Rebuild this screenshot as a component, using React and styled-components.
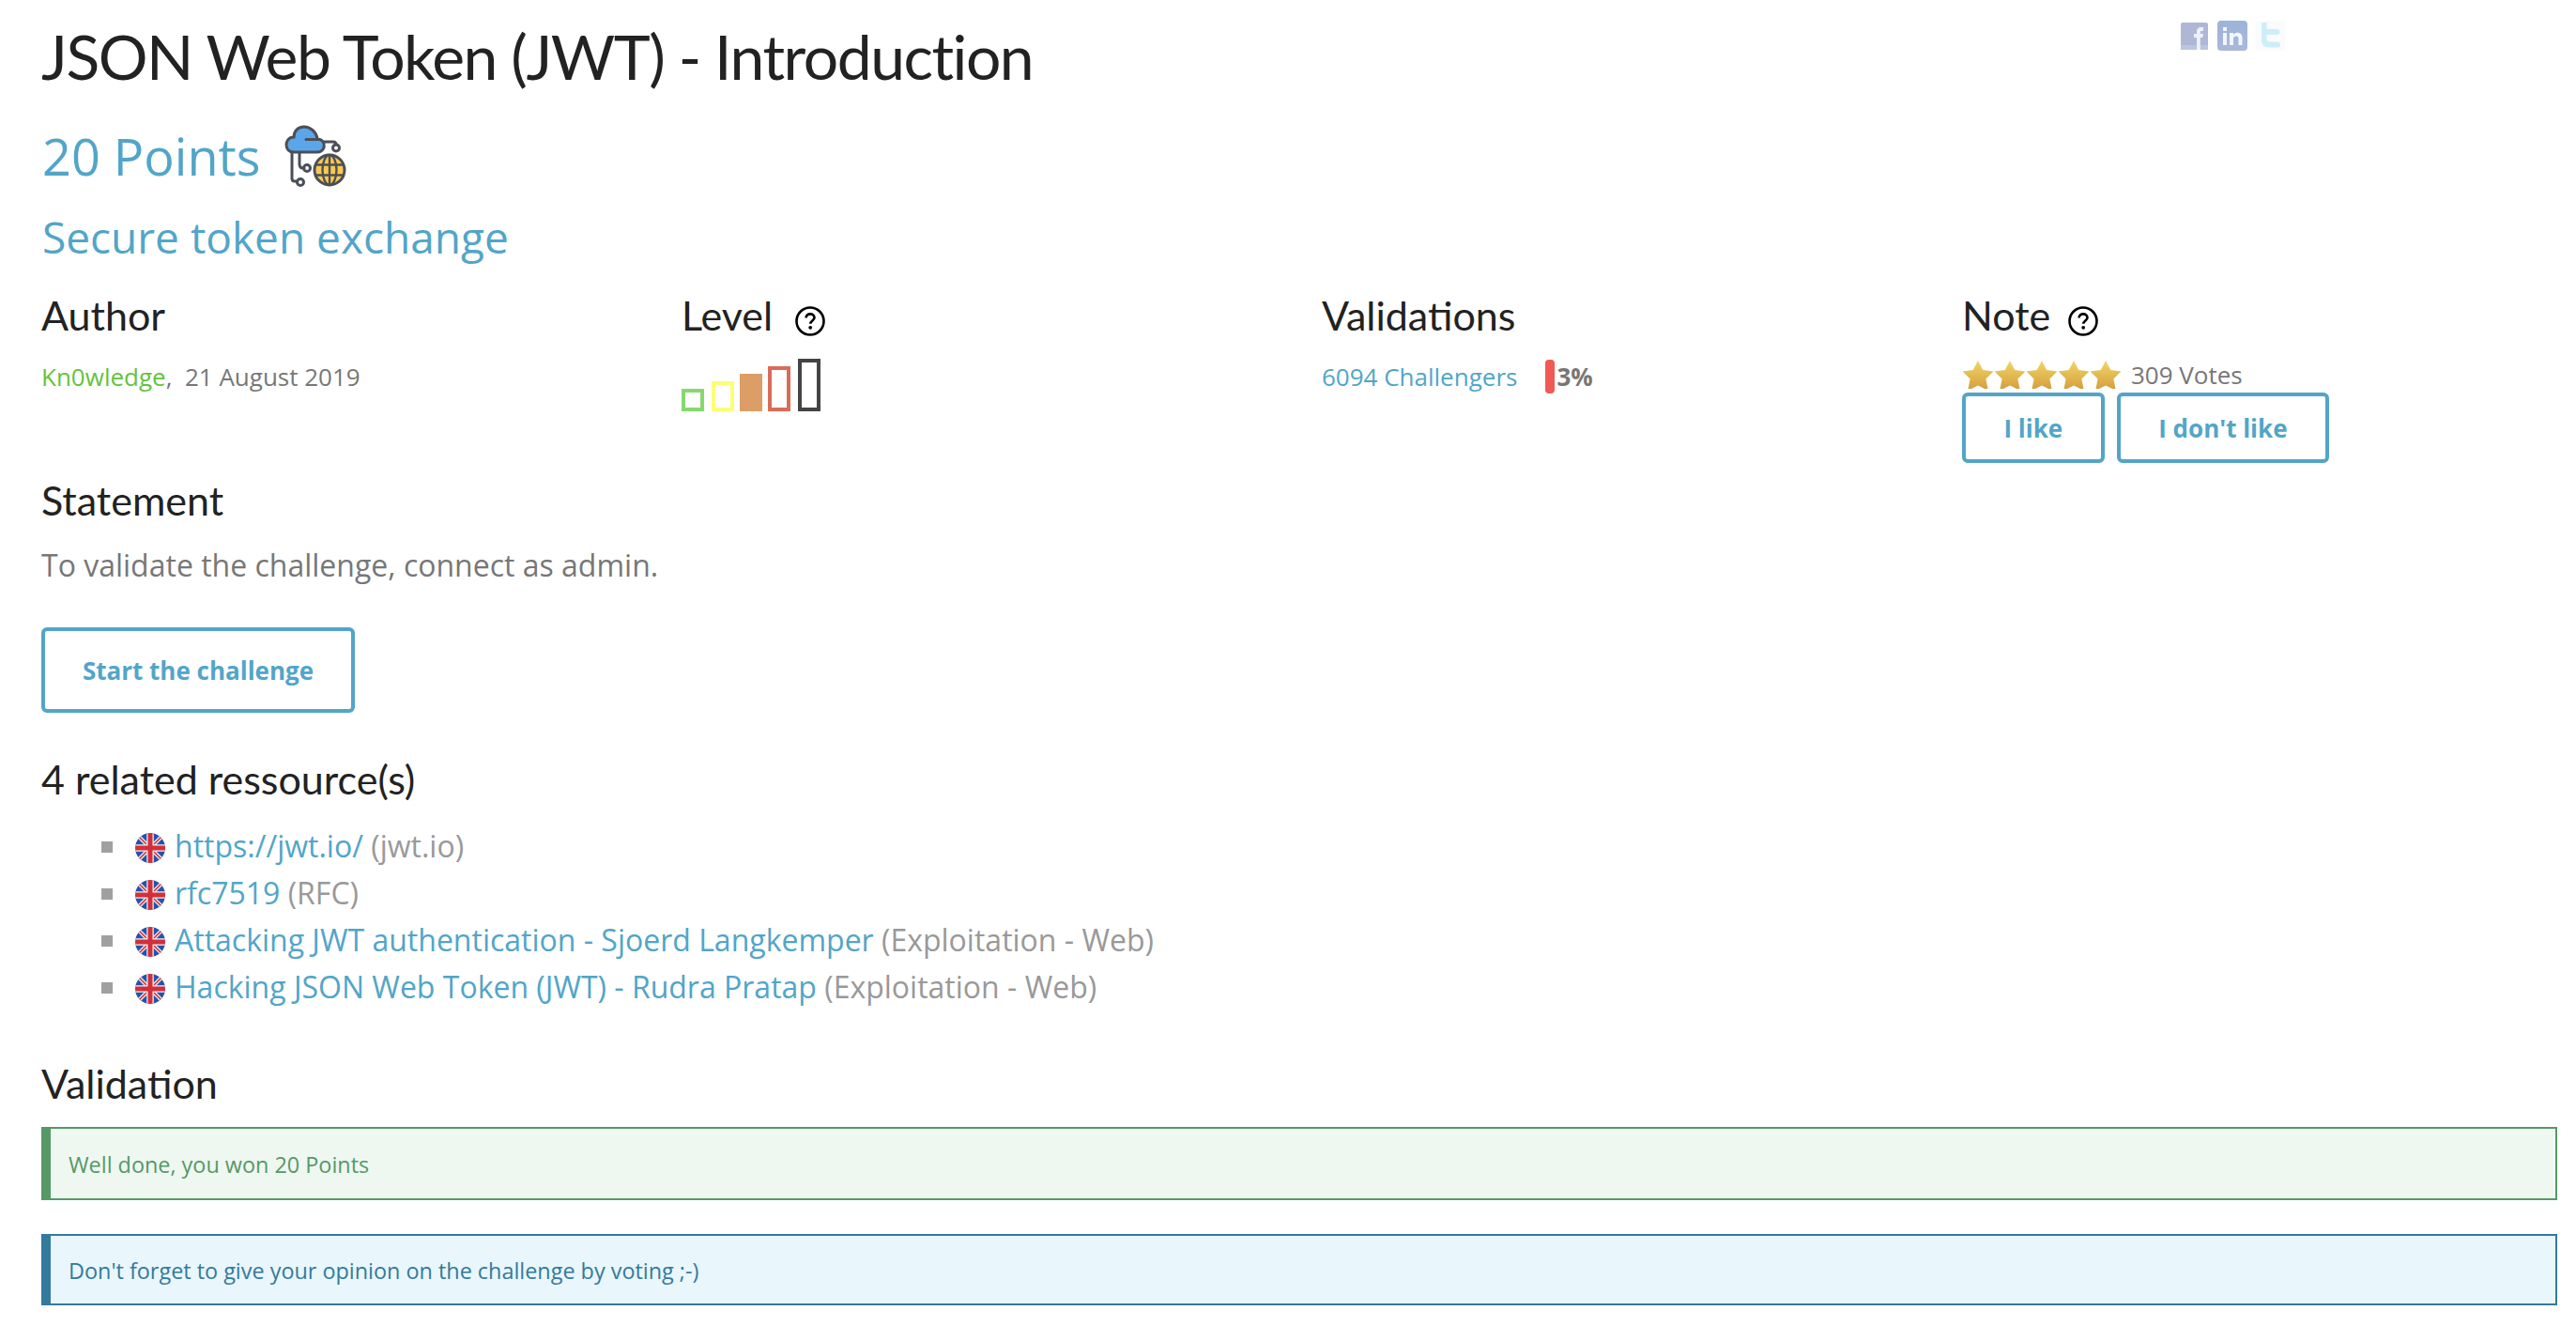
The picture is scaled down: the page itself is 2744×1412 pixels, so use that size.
import React from 'react'
import styled, { createGlobalStyle } from 'styled-components'

const BLUE = '#52a5c8'

const Global = createGlobalStyle`
  html, body {
    margin: 0;
    padding: 0;
    background: #fff;
  }
  body {
    font-family: "Open Sans", "Liberation Sans", sans-serif;
    color: #777;
  }
`

const HelpIcon = () => (
  <HelpSvg viewBox="0 0 32 32" width="32" height="32">
    <circle cx="16" cy="16" r="14.5" fill="none" stroke="#000" strokeWidth="2.6" />
    <path d="M11.6 12.6c0-2.6 2-4.2 4.5-4.2s4.4 1.5 4.4 3.8c0 3.3-4.2 3.4-4.2 6.6" fill="none" stroke="#000" strokeWidth="2.6" />
    <circle cx="16.2" cy="22.8" r="1.9" fill="#000" />
  </HelpSvg>
)

const CloudIcon = () => (
  <CloudSvg viewBox="22 8 68 68" width="68" height="68">
    <g fill="none" stroke="#4b4f58" strokeWidth="3" strokeLinecap="round">
      <path d="M31 38V66q0 3 3 3H36" />
      <path d="M39 38V51q0 4 4 4H44" />
      <path d="M65 27H75q3 0 3 3" />
      <circle cx="78" cy="33.5" r="3.5" />
      <circle cx="40" cy="70" r="3.5" />
      <circle cx="47" cy="55" r="3.5" />
    </g>
    <path
      d="M33 38H58C64 38 66 33 65 29C64 26 61 24 58 24C57 16 50 11 44 11C37 11 33 16 33 22C27 22 25 27 25 30C25 35 28 38 33 38Z"
      fill="#5aa6e9"
      stroke="#4b4f58"
      strokeWidth="3"
    />
    <path d="M46 24.500H60" stroke="#4b4f58" strokeWidth="3" strokeLinecap="round" />
    <circle cx="71" cy="57" r="16" fill="#fbc94f" stroke="#4b4f58" strokeWidth="3" />
    <g fill="none" stroke="#4b4f58" strokeWidth="2.4">
      <ellipse cx="71" cy="57" rx="7.500" ry="16" />
      <path d="M71 41V73M56 51.500H86M56 62.500H86" />
    </g>
  </CloudSvg>
)

const FlagIcon = ({ id }) => (
  <FlagSvg viewBox="0 0 32 32" width="32" height="32">
    <clipPath id={id}>
      <circle cx="16" cy="16" r="16" />
    </clipPath>
    <g clipPath={`url(#${id})`}>
      <rect width="32" height="32" fill="#2553a8" />
      <path d="M2 2L30 30M30 2L2 30" stroke="#eceff5" strokeWidth="4" />
      <path d="M2 2L30 30M30 2L2 30" stroke="#d32f3a" strokeWidth="1.600" />
      <path d="M16 0V32M0 16H32" stroke="#f2f2f2" strokeWidth="7.500" />
      <path d="M16 0V32M0 16H32" stroke="#d32f3a" strokeWidth="5" />
    </g>
  </FlagSvg>
)

const Star = ({ id }) => (
  <svg viewBox="0 0 34 30" width="34" height="30">
    <defs>
      <linearGradient id={id} x1="0" y1="0" x2="0" y2="1">
        <stop offset="0" stopColor="#f0d765" />
        <stop offset="1" stopColor="#d5a040" />
      </linearGradient>
    </defs>
    <path
      d="M17 0L22.200 10L33.500 11.500L25.400 19.600L27.500 30H24L17 26.500L10 30H6.500L8.600 19.600L0.500 11.500L11.800 10Z"
      fill={`url(#${id})`}
    />
  </svg>
)

const Facebook = () => (
  <svg viewBox="0 0 29 29" width="29" height="29">
    <rect width="29" height="29" rx="2" fill="#aeb8d6" />
    <rect y="24" width="29" height="5" fill="#bcc5de" />
    <path d="M17 29V16H14V12H17V9.500C17 6.500 18.800 5 21.500 5H24V9H22C21 9 20.800 9.500 20.800 10.400V12H24L23.400 16H20.800V29Z" fill="#eef1f8" />
  </svg>
)

const Linkedin = () => (
  <svg viewBox="0 0 32 32" width="32" height="32">
    <defs>
      <linearGradient id="li" x1="0" y1="0" x2="0" y2="1">
        <stop offset="0" stopColor="#9db3d9" />
        <stop offset="1" stopColor="#aab8da" />
      </linearGradient>
    </defs>
    <rect width="32" height="32" rx="4" fill="url(#li)" />
    <path d="M6 13H10V26H6ZM6 7H10V11H6ZM13 13H17V15C18 13.500 19.500 12.800 21.200 12.800C24.800 12.800 26.500 15 26.500 18.500V26H22.500V19.500C22.500 17.500 21.800 16.500 20.200 16.500C18.400 16.500 17 17.600 17 19.800V26H13Z" fill="#f2f5fb" />
  </svg>
)

const Twitter = () => (
  <svg viewBox="0 0 32 32" width="32" height="32">
    <rect width="32" height="32" fill="#fafbfd" />
    <path d="M7 2H12.500V9H24C26 9 26.500 10.500 26.500 12C26.500 13.500 26 15 24 15H12.500V19C12.500 21.500 13.500 22.500 16 22.500H24.500C26.500 22.500 27 24 27 25.500C27 27 26.500 28.500 24.500 28.500H15C10 28.500 7 25.500 7 20.500Z" fill="#cdeef8" />
  </svg>
)

const App = () => (
  <Page>
    <Global />
    <TitleRow>
      <Title>JSON Web Token (JWT) - Introduction</Title>
      <Social>
        <Facebook />
        <Linkedin />
        <Twitter />
      </Social>
    </TitleRow>

    <PointsRow>
      <Points>20 Points</Points>
      <CloudIcon />
    </PointsRow>
    <Subtitle>Secure token exchange</Subtitle>

    <Columns>
      <Column>
        <Heading>Author</Heading>
        <Meta>
          <AuthorLink>Kn0wledge</AuthorLink>,&nbsp; 21 August 2019
        </Meta>
      </Column>
      <Column>
        <Heading>Level <HelpIcon /></Heading>
        <Bars>
          <Bar $h={24} $color="#86d96d" />
          <Bar $h={32} $gap={8} $color="#fdfd76" />
          <Bar $h={40} $gap={6} $color="#dc9d66" $filled />
          <Bar $h={48} $gap={6} $color="#d96c58" />
          <Bar $h={56} $gap={8} $color="#444" />
        </Bars>
      </Column>
      <Column>
        <Heading>Validations</Heading>
        <Meta>
          <Link>6094 Challengers</Link>
          <Gauge />
          <Percent>3%</Percent>
        </Meta>
      </Column>
      <Column>
        <Heading $gap={19}>Note <HelpIcon /></Heading>
        <Rating>
          <Stars>
            {[1, 2, 3, 4, 5].map(n => <Star key={n} id={`star${n}`} />)}
          </Stars>
          <Votes>309 Votes</Votes>
        </Rating>
        <VoteButtons>
          <VoteButton>I like</VoteButton>
          <VoteButton>I don't like</VoteButton>
        </VoteButtons>
      </Column>
    </Columns>

    <SectionHeading $top={10}>Statement</SectionHeading>
    <Statement>To validate the challenge, connect as admin.</Statement>
    <StartButton>Start the challenge</StartButton>

    <SectionHeading $top={41}>4 related ressource(s)</SectionHeading>
    <Resources>
      <Resource>
        <FlagIcon id="flag1" />
        <span><Link>https://jwt.io/</Link> <Muted>(jwt.io)</Muted></span>
      </Resource>
      <Resource>
        <FlagIcon id="flag2" />
        <span><Link>rfc7519</Link> <Muted>(RFC)</Muted></span>
      </Resource>
      <Resource>
        <FlagIcon id="flag3" />
        <span><Link>Attacking JWT authentication - Sjoerd Langkemper</Link> <Muted>(Exploitation - Web)</Muted></span>
      </Resource>
      <Resource>
        <FlagIcon id="flag4" />
        <span><Link>Hacking JSON Web Token (JWT) - Rudra Pratap</Link> <Muted>(Exploitation - Web)</Muted></span>
      </Resource>
    </Resources>

    <SectionHeading $top={49}>Validation</SectionHeading>
    <Alert $color="#559966" $bg="#eff7f1" $height={78} $top={16}>Well done, you won 20 Points</Alert>
    <Alert $color="#337a9c" $bg="#e9f6fc" $height={76} $top={36}>Don't forget to give your opinion on the challenge by voting ;-)</Alert>
  </Page>
)

const Page = styled.div`
  box-sizing: border-box;
  width: 2744px;
  padding: 0 20px 0 44px;
`

const TitleRow = styled.div`
  display: flex;
  justify-content: space-between;
  align-items: flex-start;
  height: 124px;
`

const Title = styled.h1`
  margin: 12px 0 0;
  font: 400 66px/96px Lato, "Liberation Sans", sans-serif;
  letter-spacing: -1.5px;
  color: #222;
`

const Social = styled.div`
  display: flex;
  align-items: center;
  gap: 8px;
  margin: 22px 290px 0 0;
  filter: blur(0.6px);
  svg:first-child {
    margin-right: 2px;
  }
`

const PointsRow = styled.div`
  display: flex;
  align-items: center;
  gap: 25px;
  height: 84px;
  padding-left: 1px;
`

const Points = styled.div`
  font-size: 54px;
  line-height: 84px;
  color: ${BLUE};
`

const CloudSvg = styled.svg`
  display: block;
`

const Subtitle = styled.div`
  margin-top: 12px;
  padding-left: 1px;
  font-size: 46px;
  line-height: 64px;
  color: ${BLUE};
`

const Columns = styled.div`
  display: grid;
  grid-template-columns: repeat(3, 682px) 1fr;
  margin-top: 22px;
`

const Column = styled.div`
  min-width: 0;
`

const Heading = styled.h3`
  display: flex;
  align-items: center;
  gap: ${p => p.$gap || 24}px;
  margin: 0;
  font: 400 43px/60px Lato, "Liberation Sans", sans-serif;
  color: #222;
`

const HelpSvg = styled.svg`
  display: block;
  margin-top: 11px;
`

const Meta = styled.div`
  display: flex;
  align-items: center;
  white-space: pre;
  margin-top: 15px;
  font-size: 26px;
  line-height: 40px;
`

const AuthorLink = styled.span`
  color: #65c33b;
`

const Link = styled.span`
  color: ${BLUE};
`

const Muted = styled.span`
  color: #999;
`

const Gauge = styled.span`
  width: 10px;
  height: 36px;
  margin-left: 30px;
  border-radius: 4px;
  background: #ef5a55;
`

const Percent = styled.span`
  margin-left: 2px;
  font-weight: 700;
`

const Bars = styled.div`
  display: flex;
  align-items: flex-end;
  height: 56px;
  margin-top: 16px;
`

const Bar = styled.span`
  box-sizing: border-box;
  width: 24px;
  height: ${p => p.$h}px;
  margin-left: ${p => p.$gap || 0}px;
  border: 4px solid ${p => p.$color};
  background: ${p => (p.$filled ? p.$color : 'transparent')};
`

const Rating = styled.div`
  display: flex;
  align-items: center;
  margin-top: 17px;
  height: 32px;
`

const Stars = styled.div`
  display: flex;
  overflow: hidden;
  svg {
    display: block;
  }
`

const Votes = styled.span`
  margin-left: 10px;
  font-size: 26px;
`

const VoteButtons = styled.div`
  display: flex;
  gap: 13px;
  margin-top: 3px;
`

const ButtonBase = styled.button`
  box-sizing: border-box;
  padding: 0 40.500px;
  background: #fff;
  border: 4px solid ${BLUE};
  border-radius: 6px;
  font-family: "Open Sans", "Liberation Sans", sans-serif;
  font-weight: 700;
  color: ${BLUE};
`

const VoteButton = styled(ButtonBase)`
  height: 75px;
  font-size: 26px;
`

const SectionHeading = styled(Heading)`
  margin-top: ${p => p.$top}px;
`

const Statement = styled.p`
  margin: 17px 0 0;
  font-size: 32px;
  line-height: 44px;
`

const StartButton = styled(ButtonBase)`
  display: block;
  width: 334px;
  height: 91px;
  margin-top: 44px;
  padding: 0;
  font-size: 26px;
`

const Resources = styled.ul`
  margin: 15px 0 0;
  padding: 0 0 0 64px;
  list-style: none;
`

const Resource = styled.li`
  display: flex;
  align-items: center;
  height: 50px;
  font-size: 32px;
  white-space: pre;
  &::before {
    content: "";
    width: 12px;
    height: 12px;
    margin: 3px 24px 0 0;
    background: #a0a0a0;
  }
`

const FlagSvg = styled.svg`
  display: block;
  margin: 6px 10px 0 0;
`

const Alert = styled.div`
  box-sizing: border-box;
  display: flex;
  align-items: center;
  height: ${p => p.$height}px;
  margin-top: ${p => p.$top}px;
  padding: 2px 0 0 19px;
  border: 2px solid ${p => p.$color};
  border-left-width: 10px;
  background: ${p => p.$bg};
  color: ${p => p.$color};
  font-size: 23.4px;
`

export default App
